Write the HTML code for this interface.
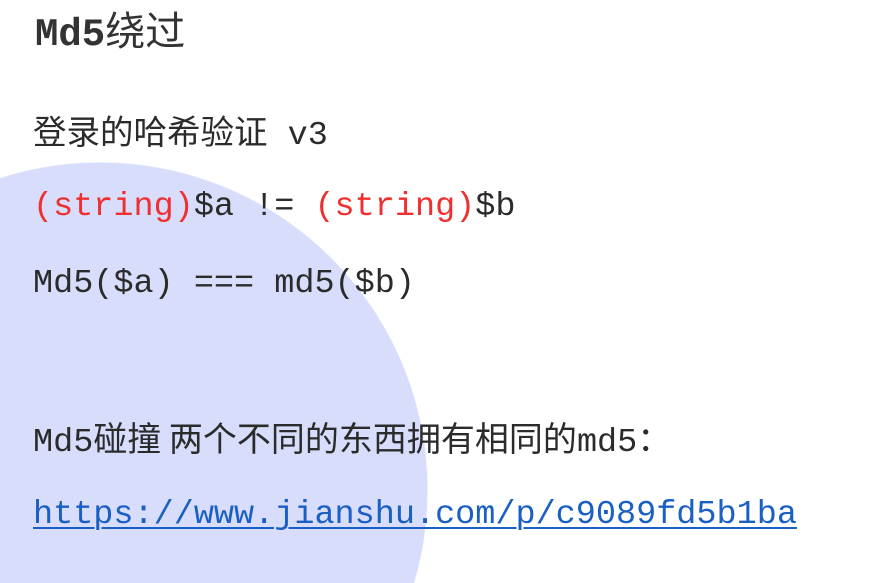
<!DOCTYPE html>
<html style="overflow:hidden;height:583px"><head><meta charset="utf-8"><style>
body{margin:0;width:891px;height:583px;overflow:hidden;background:#fff;font-family:"Liberation Mono","Noto Sans CJK SC",monospace;color:#2b2b2b}
.w{position:relative;width:891px;height:583px;overflow:hidden}
.c{position:absolute;left:0;top:162px;width:428px;height:421px;background:radial-gradient(circle 328px at 100px 328px,#d7ddfb 99.7%,transparent 100%)}
.t{position:absolute;left:33px;white-space:nowrap;line-height:1}
.r{color:#f03030}
.k{font-family:'Noto Sans CJK SC',sans-serif}
a{color:#1a5fc4;text-decoration:underline;text-decoration-thickness:2px;text-underline-offset:4px}
</style></head><body><div class="w">
<div class="c"></div>
<div class="t" style="top:8px;left:35px;font-size:39px;font-weight:bold;color:#333">Md5<span class="k" style="font-weight:normal;font-size:40px">绕过</span></div>
<div class="t" style="top:113px;font-size:33.5px"><span class="k">登录的哈希验证</span> v3</div>
<div class="t" style="top:191px;font-size:33.5px"><span class="r">(string)</span>$a != <span class="r">(string)</span>$b</div>
<div class="t" style="top:268px;font-size:33.5px">Md5($a) === md5($b)</div>
<div class="t" style="top:420px;font-size:33.5px">Md5<span class="k" style="font-size:34px">碰撞 两个不同的东西拥有相同的</span>md5<span class="k" style="font-size:34px">：</span></div>
<div class="t" style="top:499px;font-size:33.5px"><a>https://www.jianshu.com/p/c9089fd5b1ba</a></div>
</div></body></html>
